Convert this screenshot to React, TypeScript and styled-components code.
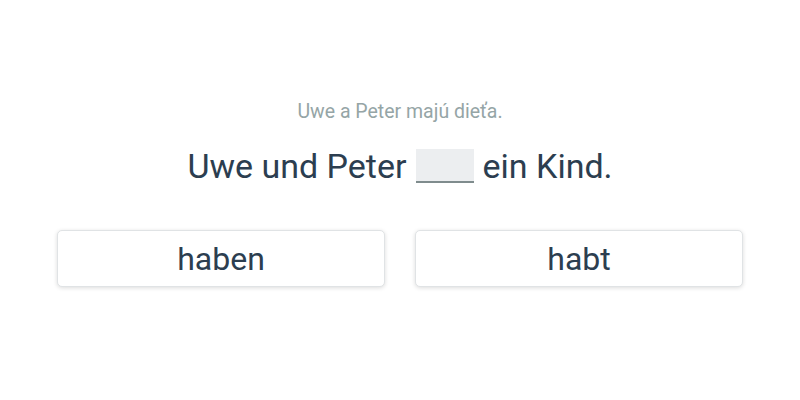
import React from "react";
import styled, { createGlobalStyle } from "styled-components";

const Global = createGlobalStyle`
  html, body { margin: 0; padding: 0; background: #ffffff; }
  body { font-family: Roboto, "Noto Sans", sans-serif; width: 800px; height: 400px; }
`;

const Page = styled.main`
  display: flex;
  flex-direction: column;
  align-items: center;
  padding-top: 100px;
`;

const Hint = styled.div`
  font-size: 19.5px;
  line-height: 24px;
  color: #95a5a6;
`;

const Sentence = styled.div`
  margin-top: 22px;
  font-size: 34px;
  line-height: 40px;
  color: #2c3e50;
  display: flex;
  align-items: center;
  gap: 9px;
`;

const Blank = styled.span`
  display: inline-block;
  width: 58px;
  height: 32px;
  background: #eceef0;
  border-bottom: 2px solid #7f8c8d;
`;

const Options = styled.div`
  margin-top: 44px;
  display: grid;
  grid-template-columns: 328px 328px;
  gap: 30px;
`;

const Option = styled.button`
  height: 57px;
  box-sizing: border-box;
  border: 1px solid #e0e3e5;
  border-radius: 5px;
  background: #ffffff;
  box-shadow: 0 1px 4px rgba(0, 0, 0, 0.14);
  font-family: Roboto, "Noto Sans", sans-serif;
  font-size: 32px;
  color: #2c3e50;
  padding: 0;
  cursor: pointer;
`;

export default function App() {
  return (
    <>
      <Global />
      <Page>
        <Hint>Uwe a Peter majú dieťa.</Hint>
        <Sentence>
          <span>Uwe und Peter</span>
          <Blank />
          <span>ein Kind.</span>
        </Sentence>
        <Options>
          <Option>haben</Option>
          <Option>habt</Option>
        </Options>
      </Page>
    </>
  );
}
